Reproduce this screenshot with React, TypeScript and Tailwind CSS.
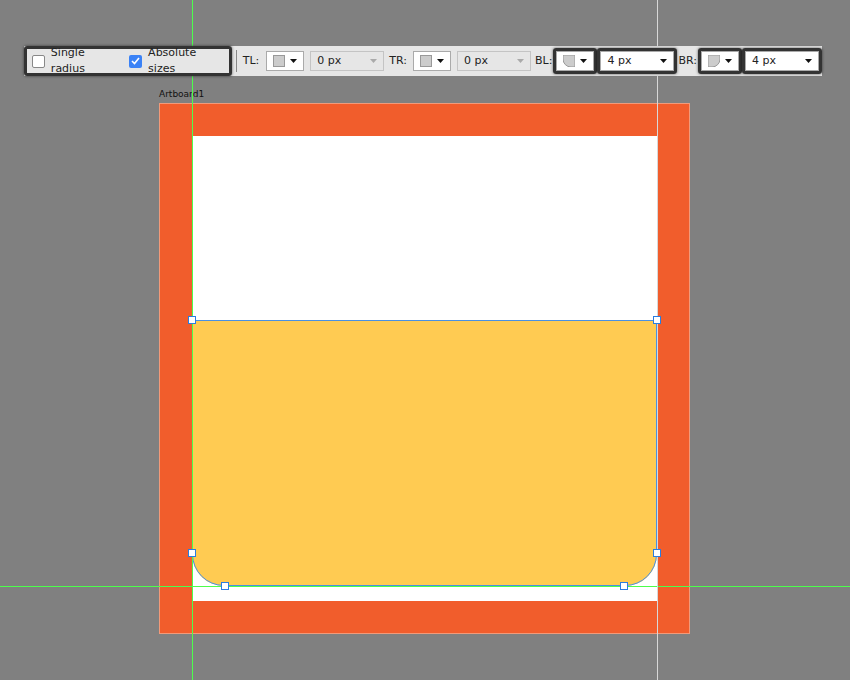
import React from "react";

const Caret = () => (
  <svg width="7" height="4" viewBox="0 0 7 4"><path d="M0 0h7L3.5 4z" fill="#111" /></svg>
);

function Drop({ icon, outlined }: { icon: React.ReactNode; outlined?: boolean }) {
  return (
    <div className={outlined ? "rounded-[3px] border-[3px] border-[#333] shadow-[0_0_3px_rgba(0,0,0,0.6)]" : "border-[3px] border-transparent"}>
      <div className="flex h-[20px] w-[38px] items-center justify-between border border-[#aaa] bg-white px-[6px]">
        {icon}
        <Caret />
      </div>
    </div>
  );
}

function Input({ w, val, disabled, outlined }: { w: string; val: string; disabled?: boolean; outlined?: boolean }) {
  return (
    <div className={outlined ? "rounded-[3px] border-[3px] border-[#333] shadow-[0_0_3px_rgba(0,0,0,0.6)]" : "border-[3px] border-transparent"}>
      <div className={`flex h-[20px] ${w} items-center justify-between border px-[6px] ${disabled ? "border-[#c4c4c4] bg-[#e6e6e6]" : "border-[#aaa] bg-white"}`}>
        <span>{val}</span>
        <svg width="7" height="4" viewBox="0 0 7 4"><path d="M0 0h7L3.5 4z" fill={disabled ? "#aaa" : "#111"} /></svg>
      </div>
    </div>
  );
}

const Square = () => <div className="h-[12px] w-[12px] border border-[#999] bg-[#ccc]" />;
const BLIcon = () => (
  <svg width="12" height="12" viewBox="0 0 12 12"><path d="M0 0h12v12H8A8 8 0 0 1 0 4z" fill="#ccc" stroke="#999" /></svg>
);
const BRIcon = () => (
  <svg width="12" height="12" viewBox="0 0 12 12"><path d="M0 0h12v4A8 8 0 0 1 4 12H0z" fill="#ccc" stroke="#999" /></svg>
);

const Handle = ({ x, y }: { x: number; y: number }) => (
  <div className="absolute h-[8px] w-[8px] border border-[#2a7de1] bg-white" style={{ left: x - 4, top: y - 4 }} />
);

export default function App() {
  return (
    <div className="relative h-[680px] w-[850px] overflow-hidden bg-[#808080] text-[11px] text-[#222]" style={{ fontFamily: "Tahoma, 'DejaVu Sans', sans-serif" }}>
      {/* artboard */}
      <div className="absolute left-[159px] top-[88px] text-[9px] text-[#111]">Artboard1</div>
      <div className="absolute left-[159px] top-[103px] h-[531px] w-[531px] border border-[#f19a7a] bg-[#f15d2c] p-[32px]">
        <div className="flex h-[465px] w-[465px] flex-col bg-white">
          <div className="h-[184px]" />
          <div className="h-[266px] rounded-b-[32px] bg-[#ffcb52]" />
        </div>
      </div>
      {/* selection outline */}
      <div className="absolute left-[192px] top-[320px] h-[266px] w-[465px] rounded-b-[32px] border border-[#4a90e2]" />
      {/* guides */}
      <div className="absolute left-[192px] top-0 h-[680px] w-px bg-[#4cff4c]" />
      <div className="absolute left-0 top-[586px] h-px w-[850px] bg-[#4cff4c]" />
      <div className="absolute left-[657px] top-0 h-[680px] w-px bg-[#d8d8d8]" />
      <Handle x={192} y={320} />
      <Handle x={657} y={320} />
      <Handle x={192} y={553} />
      <Handle x={657} y={553} />
      <Handle x={225} y={586} />
      <Handle x={624} y={586} />

      {/* toolbar */}
      <div className="absolute left-[24px] top-[46px] flex h-[30px] w-[798px] items-center bg-[#e6e6e6]">
        <div className="flex h-[30px] items-center gap-[6px] rounded-[3px] border-[3px] border-[#333] pl-[5px] pr-[3px] shadow-[0_0_3px_rgba(0,0,0,0.6)]">
          <div className="h-[13px] w-[13px] rounded-[2px] border border-[#888] bg-white" />
          <span className="text-[11px]">Single radius</span>
          <div className="ml-[2px] flex h-[13px] w-[13px] items-center justify-center rounded-[2px] bg-[#3b82f6]">
            <svg width="9" height="8" viewBox="0 0 9 8"><path d="M1 4l2.5 2.5L8 1" stroke="#fff" strokeWidth="1.6" fill="none" /></svg>
          </div>
          <span>Absolute sizes</span>
        </div>
        <div className="mx-[4px] h-[22px] w-px bg-[#888]" />
        <span className="ml-[2px] mr-[4px]">TL:</span>
        <Drop icon={<Square />} />
        <Input w="w-[74px]" val="0 px" disabled />
        <span className="ml-[2px] mr-[3px]">TR:</span>
        <Drop icon={<Square />} />
        <Input w="w-[74px]" val="0 px" disabled />
        <span className="ml-[1px] mr-[1px]">BL:</span>
        <Drop icon={<BLIcon />} outlined />
        <Input w="w-[74px]" val="4 px" outlined />
        <span className="mx-[1px]">BR:</span>
        <Drop icon={<BRIcon />} outlined />
        <Input w="w-[74px]" val="4 px" outlined />
      </div>
    </div>
  );
}
